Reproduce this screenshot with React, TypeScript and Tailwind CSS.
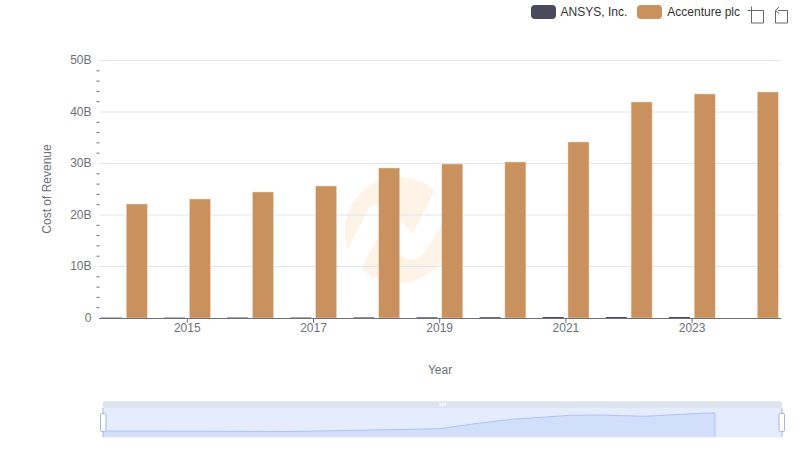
const accenture = [204, 199, 192, 186, 168, 164, 162, 142, 102, 94, 92];
const ansys = [317.6, 317.6, 317.5, 317.5, 317.4, 317.3, 317.2, 317, 317, 317, 318];
const gridY = [60.5, 112, 163.5, 215, 266.5, 318];
const yLabels = ['50B', '40B', '30B', '20B', '10B', '0'];
const years = ['2015', '2017', '2019', '2021', '2023'];
const minorTicks = [0, 1, 2, 3, 4].flatMap(i => [1, 2, 3, 4].map(j => 60.5 + i * 51.5 + j * 10.3));
const areaTop = 'M103 431 L290 431.5 L400 429.5 L440 428.7 L476 423.5 L512 419.3 L570 415.3 L600 415 L645 416.3 L700 413.3 L715 413';

function Legend({ color, label }: { color: string; label: string }) {
  return (
    <div className="flex items-center gap-[5px]">
      <span className="w-[25px] h-[14px] rounded-[4px]" style={{ background: color }} />
      <span className="text-[12px] leading-[14px] text-[#333]">{label}</span>
    </div>
  );
}

function App() {
  return (
    <div className="w-[800px] h-[461px] bg-white overflow-hidden font-['Liberation_Sans',Arial,sans-serif]">
      <div className="h-[24px] flex items-start justify-end pt-[5px] pr-[11px]">
        <div className="flex gap-[10px]">
          <Legend color="#4a4a5c" label="ANSYS, Inc." />
          <Legend color="#c8915e" label="Accenture plc" />
        </div>
        <svg className="ml-[7px] -mt-[5px]" width="42" height="24" viewBox="747 0 42 24" fill="none" stroke="#666" strokeWidth="1">
          <path d="M747.5 10.5H763.5V23H751.5V6.5" />
          <path d="M778 10.5H787.5V23H775.5V10.5M775.5 10.5L779 7M775.5 10.5L779 13.5" />
        </svg>
      </div>

      <svg className="block" width="800" height="437" viewBox="0 24 800 437">
        {/* watermark */}
        <g transform="translate(330 160) scale(0.3333)" fill="#fdf3e6">
          <path d="M53 268 A163 163 0 0 1 315 92 L247 222 L210 178 L150 138 Q130 128 115 150 Z" />
          <path d="M93 325 L147 225 L215 287 Q255 315 285 275 L360 157 A163 163 0 0 1 93 325 Z" />
        </g>

        {gridY.slice(0, 5).map(y => (
          <line key={y} x1="100" x2="781" y1={y} y2={y} stroke="#e0e6f1" />
        ))}
        {minorTicks.map(y => (
          <line key={y} x1="96.5" x2="99.5" y1={y} y2={y} stroke="#6e7079" />
        ))}
        {yLabels.map((t, i) => (
          <text key={t} x="91.5" y={gridY[i] + 3.5} textAnchor="end" fontSize="12" fill="#6e7079">{t}</text>
        ))}
        <text transform="translate(51 189) rotate(-90)" textAnchor="middle" fontSize="12" fill="#6e7079">Cost of Revenue</text>

        {ansys.map((y, i) => (
          <rect key={i} x={101 + 63.1 * i} y={y} width="21" height={318 - y} fill="#4a4a5c" />
        ))}
        {accenture.map((y, i) => (
          <rect key={i} x={126.3 + 63.1 * i} y={y} width="21" height={318 - y} fill="#c8915e" stroke="#f3dcc6" strokeWidth="0.5" />
        ))}

        <line x1="99" x2="781" y1="318.5" y2="318.5" stroke="#6e7079" />
        {years.map((t, i) => (
          <g key={t}>
            <line x1={187.3 + 126.2 * i} x2={187.3 + 126.2 * i} y1="318" y2="323" stroke="#6e7079" />
            <text x={187.3 + 126.2 * i} y="332" textAnchor="middle" fontSize="12" fill="#6e7079">{t}</text>
          </g>
        ))}
        <text x="440" y="374" textAnchor="middle" fontSize="12" fill="#6e7079">Year</text>

        {/* data zoom */}
        <rect x="103" y="401.5" width="679" height="36" rx="2" fill="#e4e9f5" />
        <rect x="103" y="408" width="679" height="29" fill="#e5ecfd" />
        <path d={`${areaTop} V436.7 H103 Z`} fill="#d2dffb" />
        <path d={`${areaTop} V436.7`} fill="none" stroke="#aec4f6" strokeWidth="1" />
        <rect x="103" y="401.5" width="679" height="6.5" rx="2" fill="#dee3f0" />
        <rect x="439.5" y="403" width="1.2" height="3" fill="#fff" />
        <rect x="442" y="403" width="1.2" height="3" fill="#fff" />
        <rect x="444.5" y="403" width="1.2" height="3" fill="#fff" />
        <line x1="103" x2="103" y1="408" y2="437" stroke="#aab6d3" />
        <line x1="782" x2="782" y1="408" y2="437" stroke="#aab6d3" />
        <rect x="100.5" y="413.5" width="5.5" height="18" rx="1.5" fill="#fff" stroke="#aab6d3" />
        <rect x="779" y="413.5" width="5.5" height="18" rx="1.5" fill="#fff" stroke="#aab6d3" />
      </svg>
    </div>
  );
}

export default App;
